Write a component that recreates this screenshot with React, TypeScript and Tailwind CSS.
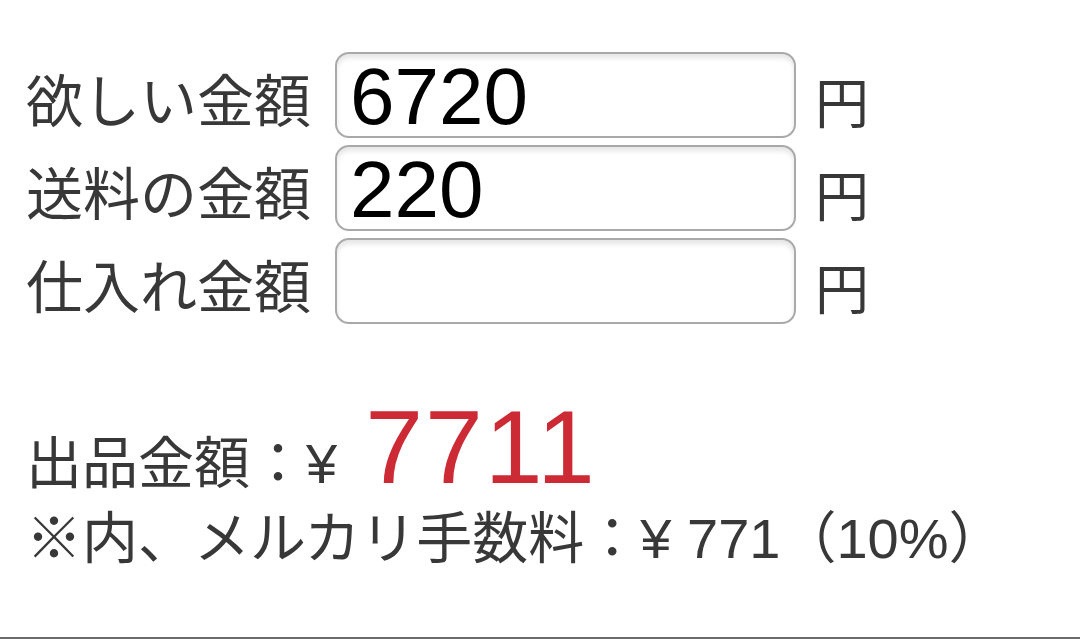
import React from 'react';

const font = { fontFamily: '"Liberation Sans", "Noto Sans CJK JP", sans-serif' };

interface RowProps {
  label: string;
  value: string;
}

function AmountRow({ label, value }: RowProps) {
  return (
    <div className="flex items-center h-[86px]">
      <span className="w-[309px] text-[57px] leading-none text-[#383838] whitespace-nowrap pt-[14px]">{label}</span>
      <div className="w-[461px] h-[86px] rounded-[14px] border-2 border-[#a9a9a9] bg-white shadow-[inset_0_4px_5px_rgba(0,0,0,0.10)] flex items-center pl-[13px]">
        <span className="text-[80px] leading-none text-black pt-[4px]">{value}</span>
      </div>
      <span className="ml-[19px] text-[54px] leading-none text-[#383838] pt-[20px]">円</span>
    </div>
  );
}

export default function App() {
  return (
    <div className="w-[1080px] h-[639px] bg-white flex flex-col border-b-2 border-[#6b6b6b]" style={font}>
      <div className="flex flex-col gap-[7px] pl-[26px] pt-[52px]">
        <AmountRow label="欲しい金額" value="6720" />
        <AmountRow label="送料の金額" value="220" />
        <AmountRow label="仕入れ金額" value="" />
      </div>

      <div className="flex flex-col pl-[26px] mt-[71px]">
        <div className="flex items-baseline text-[#383838] leading-none">
          <span className="text-[56px] leading-none">出品金額：¥</span>
          <span className="ml-[28px] text-[104px] leading-none text-[#cc2a35] tracking-[2px]">7711</span>
        </div>
        <div className="text-[56px] leading-none text-[#383838] whitespace-nowrap mt-[12px]">
          ※内、メルカリ手数料：¥ 771（10%）
        </div>
      </div>
    </div>
  );
}
